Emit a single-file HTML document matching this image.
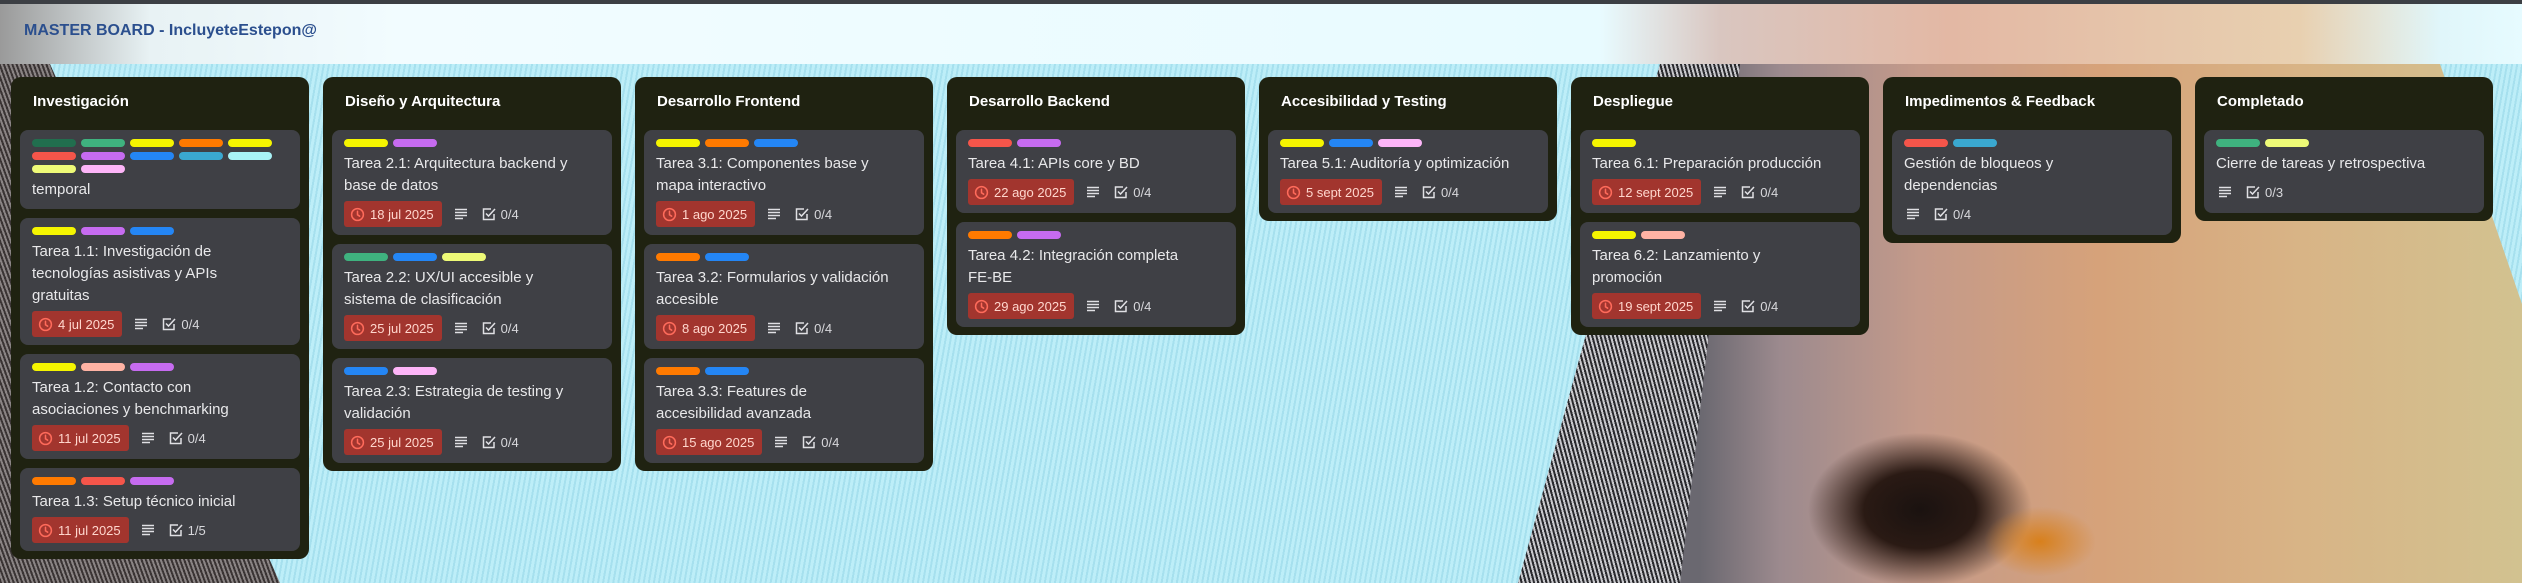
<!DOCTYPE html>
<html style="width:2522px;height:583px;overflow:hidden"><head><meta charset="utf-8"><style>
*{box-sizing:border-box;margin:0;padding:0}
body{width:2522px;height:583px;overflow:hidden;position:relative;font-family:"Liberation Sans",sans-serif;background:#b3e8f4}
.bg{position:absolute}
.hdr{position:absolute;left:0;top:0;width:2522px;height:64px;background:linear-gradient(90deg,#9a9a9a 0,#e8f2f4 150px,#f2fcff 400px,#e8fbff 1600px,#d9c6c0 1720px,#e3b8a4 1950px,#e8d0b0 2300px,#e0f6fa 2440px,#e6fbff 2522px)}
.hdr:before{content:"";position:absolute;left:0;top:0;right:0;height:4px;background:#3c3f44}
.hdr h1{position:absolute;left:24px;top:22px;font-size:16px;font-weight:bold;color:#2b4f8e}
.col{position:absolute;top:77px;width:298px;background:#1f2211;border-radius:10px;padding:0 9px 8px}
.col h2{font-size:15px;font-weight:bold;color:#fff;height:53px;line-height:50px;padding-left:13px}
.card{background:#3f4045;border-radius:8px;padding:9px 12px 8px;margin-bottom:9px}
.card:last-child{margin-bottom:0}
.lb{display:flex;flex-wrap:wrap;gap:5px;margin-bottom:6px}
.lb i{display:block;width:44px;height:8px;border-radius:4px}
.t{font-size:15px;line-height:22px;color:#e8e8ea;white-space:nowrap}
.m{display:flex;align-items:center;margin-top:4px;height:26px;color:#d8d8dc;font-size:13px}
.d{background:#a2352e;color:#ffd6cd;border-radius:3px;height:26px;display:flex;align-items:center;padding:0 8px 0 6px;margin-right:12px}
.d svg{margin-right:5px}
.ic{margin-right:14px}
.ck{display:flex;align-items:center}
.ck svg{margin-right:5px}
</style></head><body>
<div class="bg" style="left:0;top:64px;width:2522px;height:519px;background:repeating-linear-gradient(100deg,#bdeef8 0,#bdeef8 3px,#a6e0ee 3px,#a6e0ee 5px)"></div>
<div class="bg" style="left:0;top:64px;width:300px;height:519px;clip-path:polygon(0 0,50px 0,280px 519px,0 519px);background:repeating-linear-gradient(70deg,#3a3434 0,#3a3434 2px,#8a8484 2px,#8a8484 4px)"></div>
<div class="bg" style="left:1500px;top:64px;width:1022px;height:519px;clip-path:polygon(160px 0,940px 0,1022px 240px,1022px 519px,18px 519px);background:linear-gradient(90deg,#6a6870 0,#6a6870 200px,#9c8a8e 280px,#c49a8a 420px,#d6a27a 600px,#d8b486 800px,#d2c290 1022px)"></div>
<div class="bg" style="left:1500px;top:64px;width:280px;height:519px;clip-path:polygon(160px 0,240px 0,180px 519px,18px 519px);background:repeating-linear-gradient(75deg,#2a2a2e 0,#2a2a2e 2px,#c8c8cc 2px,#c8c8cc 4px)"></div>
<div class="bg" style="left:1760px;top:400px;width:320px;height:183px;background:radial-gradient(ellipse 160px 110px at 50% 60%,#1a1210 0,#2a1a14 35%,rgba(60,40,30,0) 70%)"></div>
<div class="bg" style="left:1960px;top:500px;width:160px;height:83px;background:radial-gradient(ellipse 80px 50px at 50% 50%,#d8801c 0,rgba(216,128,28,0) 70%)"></div>
<div class="hdr"><h1>MASTER BOARD - IncluyeteEstepon@</h1></div>

<svg width="0" height="0" style="position:absolute;left:0;top:0"><defs>
<symbol id="clk" viewBox="0 0 16 16"><circle cx="8" cy="8" r="6.3" fill="none" stroke="#ff6b5b" stroke-width="1.6"/><path d="M8 4.5V8.3L10.3 9.8" fill="none" stroke="#ff6b5b" stroke-width="1.6" stroke-linecap="round"/></symbol>
<symbol id="dsc" viewBox="0 0 14 14"><path d="M1 2.5H13M1 5.5H13M1 8.5H13M1 11.5H9" stroke="#e0e0e4" stroke-width="1.6"/></symbol>
<symbol id="chk" viewBox="0 0 14 14"><path d="M12 7v5.5H1.5V2H9" fill="none" stroke="#e0e0e4" stroke-width="1.5"/><path d="M4 6.5L6.5 9L13 2" fill="none" stroke="#e0e0e4" stroke-width="1.5"/></symbol>
</defs></svg>

<div class="col" style="left:11px">
<h2>Investigación</h2>
<div class="card"><div class="lb"><i style="background:#216e4e"></i><i style="background:#3fb27f"></i><i style="background:#f5f500"></i><i style="background:#ff7a00"></i><i style="background:#f5f500"></i><i style="background:#f5554a"></i><i style="background:#c66bf0"></i><i style="background:#2486f5"></i><i style="background:#3aa8d0"></i><i style="background:#a8f2f6"></i><i style="background:#eefa77"></i><i style="background:#fdb5f8"></i></div><div class="t">temporal</div></div>
<div class="card"><div class="lb"><i style="background:#f5f500"></i><i style="background:#c66bf0"></i><i style="background:#2486f5"></i></div><div class="t">Tarea 1.1: Investigación de<br>tecnologías asistivas y APIs<br>gratuitas</div><div class="m"><span class="d"><svg width="15" height="15"><use href="#clk"/></svg>4 jul 2025</span><svg class="ic" width="14" height="14"><use href="#dsc"/></svg><span class="ck"><svg width="14" height="14"><use href="#chk"/></svg>0/4</span></div></div>
<div class="card"><div class="lb"><i style="background:#f5f500"></i><i style="background:#ffb3a4"></i><i style="background:#c66bf0"></i></div><div class="t">Tarea 1.2: Contacto con<br>asociaciones y benchmarking</div><div class="m"><span class="d"><svg width="15" height="15"><use href="#clk"/></svg>11 jul 2025</span><svg class="ic" width="14" height="14"><use href="#dsc"/></svg><span class="ck"><svg width="14" height="14"><use href="#chk"/></svg>0/4</span></div></div>
<div class="card"><div class="lb"><i style="background:#ff7a00"></i><i style="background:#f5554a"></i><i style="background:#c66bf0"></i></div><div class="t">Tarea 1.3: Setup técnico inicial</div><div class="m"><span class="d"><svg width="15" height="15"><use href="#clk"/></svg>11 jul 2025</span><svg class="ic" width="14" height="14"><use href="#dsc"/></svg><span class="ck"><svg width="14" height="14"><use href="#chk"/></svg>1/5</span></div></div>
</div>

<div class="col" style="left:323px">
<h2>Diseño y Arquitectura</h2>
<div class="card"><div class="lb"><i style="background:#f5f500"></i><i style="background:#c66bf0"></i></div><div class="t">Tarea 2.1: Arquitectura backend y<br>base de datos</div><div class="m"><span class="d"><svg width="15" height="15"><use href="#clk"/></svg>18 jul 2025</span><svg class="ic" width="14" height="14"><use href="#dsc"/></svg><span class="ck"><svg width="14" height="14"><use href="#chk"/></svg>0/4</span></div></div>
<div class="card"><div class="lb"><i style="background:#3fb27f"></i><i style="background:#2486f5"></i><i style="background:#eefa77"></i></div><div class="t">Tarea 2.2: UX/UI accesible y<br>sistema de clasificación</div><div class="m"><span class="d"><svg width="15" height="15"><use href="#clk"/></svg>25 jul 2025</span><svg class="ic" width="14" height="14"><use href="#dsc"/></svg><span class="ck"><svg width="14" height="14"><use href="#chk"/></svg>0/4</span></div></div>
<div class="card"><div class="lb"><i style="background:#2486f5"></i><i style="background:#fdb5f8"></i></div><div class="t">Tarea 2.3: Estrategia de testing y<br>validación</div><div class="m"><span class="d"><svg width="15" height="15"><use href="#clk"/></svg>25 jul 2025</span><svg class="ic" width="14" height="14"><use href="#dsc"/></svg><span class="ck"><svg width="14" height="14"><use href="#chk"/></svg>0/4</span></div></div>
</div>

<div class="col" style="left:635px">
<h2>Desarrollo Frontend</h2>
<div class="card"><div class="lb"><i style="background:#f5f500"></i><i style="background:#ff7a00"></i><i style="background:#2486f5"></i></div><div class="t">Tarea 3.1: Componentes base y<br>mapa interactivo</div><div class="m"><span class="d"><svg width="15" height="15"><use href="#clk"/></svg>1 ago 2025</span><svg class="ic" width="14" height="14"><use href="#dsc"/></svg><span class="ck"><svg width="14" height="14"><use href="#chk"/></svg>0/4</span></div></div>
<div class="card"><div class="lb"><i style="background:#ff7a00"></i><i style="background:#2486f5"></i></div><div class="t">Tarea 3.2: Formularios y validación<br>accesible</div><div class="m"><span class="d"><svg width="15" height="15"><use href="#clk"/></svg>8 ago 2025</span><svg class="ic" width="14" height="14"><use href="#dsc"/></svg><span class="ck"><svg width="14" height="14"><use href="#chk"/></svg>0/4</span></div></div>
<div class="card"><div class="lb"><i style="background:#ff7a00"></i><i style="background:#2486f5"></i></div><div class="t">Tarea 3.3: Features de<br>accesibilidad avanzada</div><div class="m"><span class="d"><svg width="15" height="15"><use href="#clk"/></svg>15 ago 2025</span><svg class="ic" width="14" height="14"><use href="#dsc"/></svg><span class="ck"><svg width="14" height="14"><use href="#chk"/></svg>0/4</span></div></div>
</div>

<div class="col" style="left:947px">
<h2>Desarrollo Backend</h2>
<div class="card"><div class="lb"><i style="background:#f5554a"></i><i style="background:#c66bf0"></i></div><div class="t">Tarea 4.1: APIs core y BD</div><div class="m"><span class="d"><svg width="15" height="15"><use href="#clk"/></svg>22 ago 2025</span><svg class="ic" width="14" height="14"><use href="#dsc"/></svg><span class="ck"><svg width="14" height="14"><use href="#chk"/></svg>0/4</span></div></div>
<div class="card"><div class="lb"><i style="background:#ff7a00"></i><i style="background:#c66bf0"></i></div><div class="t">Tarea 4.2: Integración completa<br>FE-BE</div><div class="m"><span class="d"><svg width="15" height="15"><use href="#clk"/></svg>29 ago 2025</span><svg class="ic" width="14" height="14"><use href="#dsc"/></svg><span class="ck"><svg width="14" height="14"><use href="#chk"/></svg>0/4</span></div></div>
</div>

<div class="col" style="left:1259px">
<h2>Accesibilidad y Testing</h2>
<div class="card"><div class="lb"><i style="background:#f5f500"></i><i style="background:#2486f5"></i><i style="background:#fdb5f8"></i></div><div class="t">Tarea 5.1: Auditoría y optimización</div><div class="m"><span class="d"><svg width="15" height="15"><use href="#clk"/></svg>5 sept 2025</span><svg class="ic" width="14" height="14"><use href="#dsc"/></svg><span class="ck"><svg width="14" height="14"><use href="#chk"/></svg>0/4</span></div></div>
</div>

<div class="col" style="left:1571px">
<h2>Despliegue</h2>
<div class="card"><div class="lb"><i style="background:#f5f500"></i></div><div class="t">Tarea 6.1: Preparación producción</div><div class="m"><span class="d"><svg width="15" height="15"><use href="#clk"/></svg>12 sept 2025</span><svg class="ic" width="14" height="14"><use href="#dsc"/></svg><span class="ck"><svg width="14" height="14"><use href="#chk"/></svg>0/4</span></div></div>
<div class="card"><div class="lb"><i style="background:#f5f500"></i><i style="background:#ffb3a4"></i></div><div class="t">Tarea 6.2: Lanzamiento y<br>promoción</div><div class="m"><span class="d"><svg width="15" height="15"><use href="#clk"/></svg>19 sept 2025</span><svg class="ic" width="14" height="14"><use href="#dsc"/></svg><span class="ck"><svg width="14" height="14"><use href="#chk"/></svg>0/4</span></div></div>
</div>

<div class="col" style="left:1883px">
<h2>Impedimentos &amp; Feedback</h2>
<div class="card"><div class="lb"><i style="background:#f5554a"></i><i style="background:#3aa8d0"></i></div><div class="t">Gestión de bloqueos y<br>dependencias</div><div class="m"><svg class="ic" width="14" height="14" style="margin-left:2px"><use href="#dsc"/></svg><span class="ck"><svg width="14" height="14"><use href="#chk"/></svg>0/4</span></div></div>
</div>

<div class="col" style="left:2195px">
<h2>Completado</h2>
<div class="card"><div class="lb"><i style="background:#3fb27f"></i><i style="background:#eefa77"></i></div><div class="t">Cierre de tareas y retrospectiva</div><div class="m"><svg class="ic" width="14" height="14" style="margin-left:2px"><use href="#dsc"/></svg><span class="ck"><svg width="14" height="14"><use href="#chk"/></svg>0/3</span></div></div>
</div>
</body></html>
